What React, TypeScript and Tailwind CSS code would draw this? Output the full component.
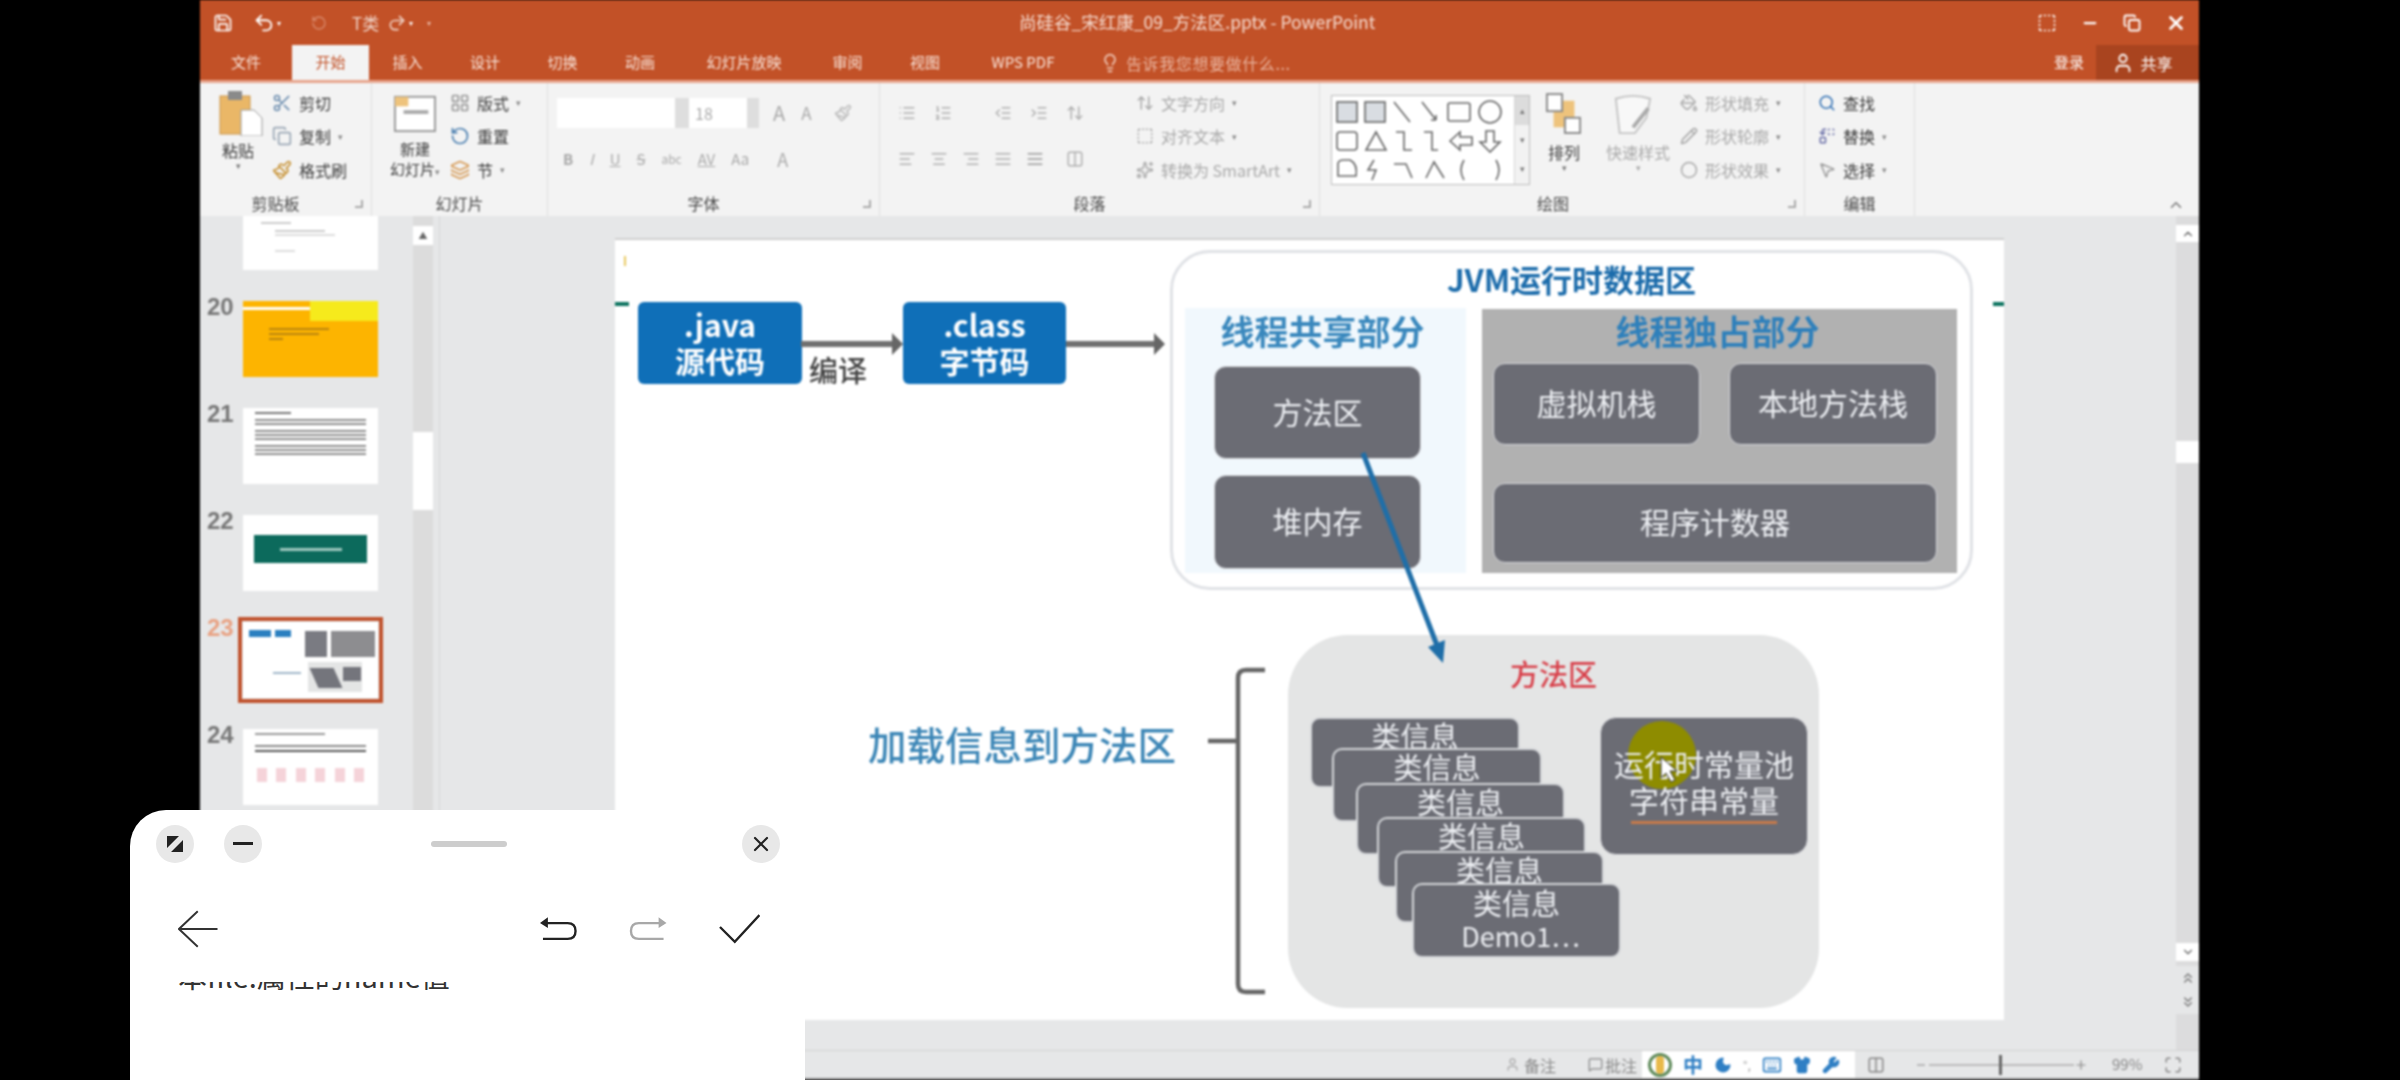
import type { ReactNode } from "react";
import clsx from "clsx";
import {
  AlignCenter,
  AlignJustify,
  AlignLeft,
  AlignRight,
  ArrowUpDown,
  Columns2,
  Copy,
  IndentDecrease,
  IndentIncrease,
  Layers,
  Lightbulb,
  List,
  ListOrdered,
  Maximize,
  MessageSquare,
  MousePointer2,
  Paintbrush,
  PaintBucket,
  Pencil,
  Replace,
  RotateCcw,
  Save,
  Scissors,
  Search,
  Sparkles,
  SquareDashed,
  User,
  Wrench,
  Moon,
  Keyboard,
  Shirt,
  LayoutGrid,
  ChevronUp,
  ChevronDown,
  ChevronsUp,
  ChevronsDown,
  Minus,
  Plus,
  Undo2,
  Redo2,
  Circle,
  X,
} from "lucide-react";

const tabs = [
  { label: "文件", width: "w-[92px]" },
  { label: "开始", width: "w-[77px]", active: true },
  { label: "插入", width: "w-[77px]" },
  { label: "设计", width: "w-[78px]" },
  { label: "切换", width: "w-[77px]" },
  { label: "动画", width: "w-[78px]" },
  { label: "幻灯片放映", width: "w-[130px]" },
  { label: "审阅", width: "w-[77px]" },
  { label: "视图", width: "w-[78px]" },
  { label: "WPS PDF", width: "w-[118px]" },
];

function Group({
  label,
  className,
  labelClass,
  launcher,
  children,
}: {
  label: string;
  className: string;
  labelClass?: string;
  launcher?: boolean;
  children: ReactNode;
}) {
  return (
    <div className={clsx("relative flex h-full shrink-0 flex-col border-r border-[#dedede]", className)}>
      <div className="flex min-h-0 flex-1">{children}</div>
      <div className={clsx("h-[26px] text-center text-[16px] leading-[26px] text-[#4a4a4a]", labelClass)}>{label}</div>
      {launcher && <div className="absolute right-[8px] bottom-[8px] size-[8px] border-r-2 border-b-2 border-[#aaa]" />}
    </div>
  );
}

function SmallButton({ icon, label, muted, caret }: { icon: ReactNode; label: string; muted?: boolean; caret?: boolean }) {
  return (
    <div className={clsx("flex h-[33.5px] items-center gap-[7px] text-[16px] whitespace-nowrap", muted ? "text-[#a9a9a9]" : "text-[#3c3c3c]")}>
      {icon}
      <span>{label}</span>
      {caret && <span className="text-[9px] text-[#888]">▾</span>}
    </div>
  );
}

function ShapeGallery() {
  return (
    <div className="mt-[12px] ml-[11px] flex h-[90px] w-[199px] border border-[#bdbdbd] bg-white">
      <svg viewBox="0 0 182 88" className="h-[88px] w-[182px]" fill="none" stroke="#666" strokeWidth="1.6">
        <rect x="5" y="6" width="20" height="20" fill="#d9dde2" />
        <rect x="33" y="6" width="20" height="20" fill="#d9dde2" />
        <path d="M62 6 L78 26 M90 6 L104 24 M104 24 l-5 0 M104 24 l0 -5" />
        <rect x="116" y="7" width="22" height="18" rx="2" />
        <circle cx="158" cy="16" r="11" />
        <rect x="5" y="36" width="20" height="18" rx="3" />
        <path d="M34 54 L44 36 L54 54 Z" />
        <path d="M64 36 H72 V54 H80 M92 36 H100 V54 H106" />
        <path d="M118 45 L128 36 V41 H140 V49 H128 V54 Z" />
        <path d="M158 56 L148 46 H154 V35 H162 V46 H168 Z" />
        <path d="M6 78 V68 Q6 64 12 64 H18 Q26 68 24 80 H6 Z" />
        <path d="M42 64 L36 74 H44 L40 84" />
        <path d="M62 68 H74 L80 82 M94 82 L102 66 L112 82" />
        <path d="M132 64 Q126 74 132 84 M164 64 Q170 74 164 84" />
      </svg>
      <div className="flex w-[15px] flex-col border-l border-[#d5d5d5] bg-[#f2f2f2] text-center text-[9px] leading-[29px] text-[#777]">
        <span className="h-[29px] bg-[#dcdcdc]">▴</span>
        <span className="h-[29px]">▾</span>
        <span className="h-[29px]">▾</span>
      </div>
    </div>
  );
}

function Ribbon() {
  const muted = "size-[18px] text-[#b0b0b0]";
  return (
    <div className="flex h-[136px] shrink-0 border-t-[3px] border-[#e7a58d] bg-[#f3f3f3] pb-0">
      <Group label="剪贴板" labelClass="pr-[20px]" launcher className="w-[172px]">
        <div className="w-[72px] pt-[7px] pl-[19px]">
          <svg viewBox="0 0 44 46" className="h-[46px] w-[44px]">
            <rect x="1" y="6" width="30" height="38" fill="#eab767" stroke="#c9964e" />
            <rect x="9" y="1" width="14" height="9" fill="#8a8a8a" />
            <path d="M22 20 H35 L43 28 V46 H22 Z" fill="#fff" stroke="#9a9a9a" />
          </svg>
          <div className="mt-[6px] w-[38px] text-center text-[16px] leading-[17px] text-[#3c3c3c]">粘贴</div>
          <div className="w-[38px] text-center text-[9px] text-[#777]">▾</div>
        </div>
        <div className="pt-[3px]">
          <SmallButton icon={<Scissors className="size-[20px] text-[#6f8fb0]" />} label="剪切" />
          <SmallButton icon={<Copy className="size-[20px] text-[#9aa7b5]" />} label="复制" caret />
          <SmallButton icon={<Paintbrush className="size-[20px] text-[#c9963c]" />} label="格式刷" />
        </div>
      </Group>
      <Group label="幻灯片" className="w-[176px]">
        <div className="w-[78px] pt-[10px] pl-[8px]">
          <svg viewBox="0 0 44 42" className="ml-[14px] h-[40px] w-[42px]">
            <rect x="1" y="4" width="42" height="36" fill="#fff" stroke="#999" strokeWidth="2" />
            <rect x="1" y="4" width="14" height="10" fill="#eec37c" />
            <rect x="10" y="18" width="26" height="4" fill="#aaa" />
          </svg>
          <div className="mt-[6px] text-center text-[15px] leading-[20px] text-[#3c3c3c]">
            <div>新建</div>
            <div className="whitespace-nowrap">幻灯片<span className="text-[9px] text-[#888]">▾</span></div>
          </div>
        </div>
        <div className="pt-[3px]">
          <SmallButton icon={<LayoutGrid className="size-[20px] text-[#999]" />} label="版式" caret />
          <SmallButton icon={<RotateCcw className="size-[20px] text-[#4b7fb0]" />} label="重置" />
          <SmallButton icon={<Layers className="size-[20px] text-[#d69a55]" />} label="节" caret />
        </div>
      </Group>
      <Group label="字体" labelClass="pr-[20px]" launcher className="w-[332px]">
        <div className="pt-[15px] pl-[9px]">
          <div className="flex h-[30px] items-center">
            <div className="h-full w-[118px] bg-white" />
            <div className="h-full w-[14px] bg-[#dedede]" />
            <div className="h-full w-[58px] bg-white pl-[6px] text-[16px] leading-[30px] text-[#aaa]">18</div>
            <div className="h-full w-[12px] bg-[#dedede]" />
            <span className="ml-[14px] text-[20px] text-[#a9a9a9]">A</span>
            <span className="ml-[16px] text-[17px] text-[#a9a9a9]">A</span>
            <Paintbrush className="ml-[22px] size-[18px] text-[#bbb]" />
          </div>
          <div className="mt-[16px] flex h-[30px] items-center gap-[16px] pl-[6px] text-[15px] text-[#a9a9a9]">
            <span className="font-bold">B</span>
            <span className="italic">I</span>
            <span className="underline">U</span>
            <span className="line-through">S</span>
            <span className="text-[12px]">abc</span>
            <span className="underline">AV</span>
            <span>Aa</span>
            <span className="ml-[12px] text-[18px]">A</span>
          </div>
        </div>
      </Group>
      <Group label="段落" labelClass="pr-[20px]" launcher className="w-[440px]">
        <div className="w-[256px] pt-[15px] pl-[18px]">
          <div className="flex h-[30px] items-center gap-[18px]">
            <List className={muted} />
            <ListOrdered className={muted} />
            <span className="w-[6px]" />
            <IndentDecrease className={muted} />
            <IndentIncrease className={muted} />
            <ArrowUpDown className={muted} />
          </div>
          <div className="mt-[16px] flex h-[30px] items-center gap-[14px]">
            <AlignLeft className={muted} />
            <AlignCenter className={muted} />
            <AlignRight className={muted} />
            <AlignJustify className={muted} />
            <AlignJustify className="size-[18px] text-[#999]" />
            <Columns2 className={clsx(muted, "ml-[8px]")} />
          </div>
        </div>
        <div className="pt-[3px]">
          <SmallButton muted icon={<ArrowUpDown className="size-[18px]" />} label="文字方向" caret />
          <SmallButton muted icon={<SquareDashed className="size-[18px]" />} label="对齐文本" caret />
          <SmallButton muted icon={<Sparkles className="size-[18px]" />} label="转换为 SmartArt" caret />
        </div>
      </Group>
      <Group label="绘图" labelClass="pr-[18px]" launcher className="w-[485px]">
        <ShapeGallery />
        <div className="w-[68px] pt-[10px] pl-[16px]">
          <svg viewBox="0 0 38 44" className="h-[42px] w-[36px]">
            <rect x="8" y="8" width="22" height="28" fill="#eec37c" />
            <rect x="1" y="1" width="16" height="18" fill="#fff" stroke="#888" strokeWidth="2" />
            <rect x="20" y="26" width="16" height="16" fill="#fff" stroke="#888" strokeWidth="2" />
          </svg>
          <div className="mt-[9px] w-[36px] text-center text-[16px] leading-[17px] text-[#3c3c3c]">排列</div>
          <div className="w-[36px] text-center text-[9px] text-[#777]">▾</div>
        </div>
        <div className="w-[80px] pt-[10px]">
          <svg viewBox="0 0 44 44" className="ml-[14px] h-[42px] w-[42px]" fill="#f8f8f8" stroke="#c4c4c4" strokeWidth="2">
            <path d="M4 6 Q22 0 40 6 L36 26 L24 42 H8 Z" />
            <path d="M22 36 L38 16" stroke="#aaa" strokeWidth="4" />
          </svg>
          <div className="mt-[9px] text-center text-[16px] leading-[17px] whitespace-nowrap text-[#a9a9a9]">快速样式</div>
          <div className="text-center text-[9px] text-[#aaa]">▾</div>
        </div>
        <div className="pt-[3px] pl-[2px]">
          <SmallButton muted icon={<PaintBucket className="size-[18px]" />} label="形状填充" caret />
          <SmallButton muted icon={<Pencil className="size-[18px]" />} label="形状轮廓" caret />
          <SmallButton muted icon={<Circle className="size-[18px]" />} label="形状效果" caret />
        </div>
      </Group>
      <Group label="编辑" className="w-[110px]">
        <div className="pt-[3px] pl-[13px]">
          <SmallButton icon={<Search className="size-[18px] text-[#2f6fb3]" />} label="查找" />
          <SmallButton icon={<Replace className="size-[18px] text-[#6a6fa8]" />} label="替换" caret />
          <SmallButton icon={<MousePointer2 className="size-[18px] text-[#999]" />} label="选择" caret />
        </div>
      </Group>
      <div className="flex flex-1 items-end justify-end pr-[14px] pb-[2px]">
        <ChevronUp className="size-[18px] text-[#777]" />
      </div>
    </div>
  );
}

function TextBlock({ rows }: { rows: number }) {
  return (
    <div className="mx-[12px] mt-[5px] flex flex-col gap-[2px]">
      {Array.from({ length: rows }).map((_, i) => (
        <div key={i} className="h-[2px] w-full bg-[#8c8c8c]" />
      ))}
    </div>
  );
}

function Thumb({ n, selected, children }: { n: number; selected?: boolean; children: ReactNode }) {
  return (
    <div className="flex h-[76px] shrink-0">
      <div className={clsx("-mt-[5px] w-[43px] pl-[7px] font-['Liberation_Sans',sans-serif] text-[24px] leading-[22px] font-bold", selected ? "text-[#e8a283]" : "text-[#777]")}>
        {n}
      </div>
      <div className={clsx("h-[76px] w-[135px] overflow-hidden bg-white", selected && "outline-4 outline-offset-1 outline-[#c0532e]")}>{children}</div>
    </div>
  );
}

function ThumbPane() {
  return (
    <div className="flex w-[240px] shrink-0 border-r border-[#d8d8d8]">
      <div className="flex w-[213px] flex-col gap-[31px] overflow-hidden">
        <div className="ml-[43px] h-[54px] w-[135px] shrink-0 bg-white px-[18px] pt-[6px]">
          <div className="h-[2px] w-[30px] bg-[#ccc]" />
          <div className="mt-[6px] ml-[14px] h-[2px] w-[50px] bg-[#ccc]" />
          <div className="mt-[2px] ml-[14px] h-[2px] w-[60px] bg-[#ddd]" />
          <div className="mt-[14px] ml-[14px] h-[2px] w-[20px] bg-[#ddd]" />
        </div>
        <Thumb n={20}>
          <div className="relative h-full bg-[#fdb400] pt-[6px]">
            <div className="h-[3px] w-full bg-white" />
            <div className="absolute top-0 right-0 h-[20px] w-[68px] bg-[#f6ea1c]" />
            <div className="mt-[18px] ml-[26px] h-[2px] w-[60px] bg-[#b98410]" />
            <div className="mt-[3px] ml-[26px] h-[2px] w-[50px] bg-[#b98410]" />
            <div className="mt-[3px] ml-[26px] h-[2px] w-[14px] bg-[#b98410]" />
          </div>
        </Thumb>
        <Thumb n={21}>
          <div className="mx-[12px] mt-[4px] h-[2px] w-[36px] bg-[#777]" />
          <TextBlock rows={2} />
          <TextBlock rows={3} />
          <TextBlock rows={3} />
        </Thumb>
        <Thumb n={22}>
          <div className="mx-[11px] mt-[20px] flex h-[28px] items-center justify-center bg-[#0c6a5c]">
            <div className="h-[3px] w-[62px] bg-[#9fc8bf]" />
          </div>
        </Thumb>
        <Thumb n={23} selected>
          <div className="relative h-full">
            <div className="absolute top-[8px] left-[6px] h-[7px] w-[22px] bg-[#2a7fc0]" />
            <div className="absolute top-[8px] left-[32px] h-[7px] w-[16px] bg-[#2a7fc0]" />
            <div className="absolute top-[9px] left-[62px] h-[26px] w-[22px] bg-[#7a7b82]" />
            <div className="absolute top-[9px] left-[88px] h-[26px] w-[44px] bg-[#8d8d90]" />
            <div className="absolute top-[40px] left-[65px] h-[30px] w-[54px] bg-[#e4e5e5]" />
            <div className="absolute top-[46px] left-[71px] h-[20px] w-[24px] skew-x-[24deg] bg-[#74757c]" />
            <div className="absolute top-[45px] left-[100px] h-[14px] w-[18px] bg-[#74757c]" />
            <div className="absolute top-[50px] left-[30px] h-[2px] w-[28px] bg-[#9fb6c8]" />
          </div>
        </Thumb>
        <Thumb n={24}>
          <div className="mx-[12px] mt-[4px] h-[2px] w-[70px] bg-[#999]" />
          <div className="mx-[12px] mt-[10px] h-[2px] bg-[#888]" />
          <div className="mx-[12px] mt-[3px] h-[2px] bg-[#555]" />
          <div className="mx-[14px] mt-[16px] flex justify-between">
            {[0, 1, 2, 3, 4, 5].map((i) => (
              <div key={i} className="h-[14px] w-[10px] bg-[#f5d3d9]" />
            ))}
          </div>
        </Thumb>
      </div>
      <div className="flex w-[20px] flex-col bg-[#dcdcdc]">
        <div className="mt-[10px] flex h-[19px] items-center justify-center bg-white text-[9px] text-[#666]">▲</div>
        <div className="mt-[187px] h-[78px] bg-white" />
      </div>
    </div>
  );
}

function Card({ className, children }: { className: string; children?: ReactNode }) {
  return (
    <div
      className={clsx(
        "absolute flex items-center justify-center rounded-[12px] border border-[#d7d8dc] bg-[#6b6c74] pb-[4px] text-[30px] leading-[36px] text-[#eceef2]",
        className,
      )}
    >
      {children}
    </div>
  );
}

function ClassCard({ className, children }: { className: string; children?: ReactNode }) {
  return (
    <div
      className={clsx(
        "absolute rounded-[10px] border-2 border-[#d5d7da] bg-[#6b6c74] text-center text-[29px] leading-[32px] text-[#eceef2]",
        className,
      )}
    >
      {children ?? "类信息"}
    </div>
  );
}

function Slide() {
  return (
    <div className="relative mt-[22px] ml-[175px] h-[782px] w-[1389px] border-t-2 border-[#cfcfcf] bg-white">
      <div className="absolute top-[62px] left-0 h-[4px] w-[14px] bg-[#0d7360]" />
      <div className="absolute top-[62px] right-0 h-[4px] w-[11px] bg-[#0d7360]" />
      <div className="absolute top-[16px] left-[9px] h-[10px] w-[2px] bg-[#e8c860]" />

      <div className="absolute top-[62px] left-[23px] flex h-[82px] w-[164px] flex-col items-center justify-center rounded-[6px] bg-[#0f6fb8] pb-[3px] text-[30px] leading-[36px] font-bold text-white">
        <span>.java</span>
        <span>源代码</span>
      </div>
      <div className="absolute top-[62px] left-[288px] flex h-[82px] w-[163px] flex-col items-center justify-center rounded-[6px] bg-[#0f6fb8] pb-[3px] text-[30px] leading-[36px] font-bold text-white">
        <span>.class</span>
        <span>字节码</span>
      </div>
      <div className="absolute top-[113px] left-[194px] text-[29px] leading-[32px] font-medium text-[#444]">编译</div>

      <div className="absolute top-[10px] left-[555px] h-[340px] w-[803px] rounded-[40px] border-[3px] border-[#e0e2e6]" />
      <div className="absolute top-[19px] left-[555px] w-[803px] text-center text-[31px] leading-[40px] font-bold text-[#1c6cab]">JVM运行时数据区</div>
      <div className="absolute top-[68px] left-[570px] h-[265px] w-[281px] bg-[#f1f8fd]" />
      <div className="absolute top-[69px] left-[867px] h-[264px] w-[475px] bg-[#b1b1b1]" />
      <div className="absolute top-[71px] left-[567px] w-[281px] text-center text-[34px] leading-[40px] font-bold text-[#3a88bd]">线程共享部分</div>
      <div className="absolute top-[71px] left-[865px] w-[475px] text-center text-[34px] leading-[40px] font-bold text-[#2f80bb]">线程独占部分</div>

      <Card className="top-[126px] left-[599px] h-[93px] w-[207px]">方法区</Card>
      <Card className="top-[235px] left-[599px] h-[94px] w-[207px]">堆内存</Card>
      <Card className="top-[123px] left-[878px] h-[82px] w-[207px]">虚拟机栈</Card>
      <Card className="top-[123px] left-[1114px] h-[82px] w-[208px]">本地方法栈</Card>
      <Card className="top-[243px] left-[878px] h-[80px] w-[444px]">程序计数器</Card>

      <div className="absolute top-[395px] left-[673px] h-[373px] w-[531px] rounded-[60px] bg-[#e4e5e5]" />
      <div className="absolute top-[415px] left-[673px] w-[531px] text-center text-[29px] leading-[36px] font-medium text-[#d8404a]">方法区</div>
      <div className="absolute top-[479px] left-[253px] text-[38.5px] leading-[48px] font-medium text-[#3c86b6]">加载信息到方法区</div>

      <ClassCard className="top-[477px] left-[695px] h-[71px] w-[210px]" />
      <ClassCard className="top-[508px] left-[717px] h-[74px] w-[210px]" />
      <ClassCard className="top-[543px] left-[741px] h-[72px] w-[209px]" />
      <ClassCard className="top-[577px] left-[762px] h-[71px] w-[209px]" />
      <ClassCard className="top-[611px] left-[780px] h-[72px] w-[209px]" />
      <ClassCard className="top-[643px] left-[797px] h-[75px] w-[209px]">
        <div className="pt-[1px]">类信息</div>
        <div className="pt-[2px] pl-[8px] text-[27px]">Demo1⋯</div>
      </ClassCard>

      <div className="absolute top-[477px] left-[985px] flex h-[138px] w-[208px] flex-col items-center rounded-[16px] border border-[#d7d8dc] bg-[#6b6c74] pt-[27px] text-[30px] leading-[36px] text-[#eceef2]">
        <div className="absolute top-[3px] left-[27px] size-[68px] rounded-full bg-[#8e8c00]" />
        <span className="relative">运行时常量池</span>
        <span className="relative">字符串常量</span>
        <div className="mt-[4px] h-[3px] w-[146px] bg-[#c87a4a]" />
      </div>

      <svg viewBox="615 238 1389 782" className="pointer-events-none absolute -top-[2px] left-0 h-[782px] w-[1389px]" fill="none">
        <path d="M801 344 H893 M1066 344 H1155" stroke="#707070" strokeWidth="6" />
        <path d="M892 333 L903 344 L892 355 Z M1154 333 L1165 344 L1154 355 Z" fill="#666" />
        <path d="M1363 453 L1438 648" stroke="#1f6ea8" strokeWidth="5" />
        <path d="M1443 663 L1428 647 L1445 640 Z" fill="#1f6ea8" />
        <path d="M1265 670 H1246 Q1238 670 1238 678 V984 Q1238 992 1246 992 H1265 M1208 741 H1238" stroke="#666" strokeWidth="4.5" />
        <path d="M1661 757 L1661 778 L1666 773 L1671 782 L1675 780 L1670 771 L1677 771 Z" fill="#fff" stroke="#333" strokeWidth="1" />
      </svg>
    </div>
  );
}

function StatusBar() {
  return (
    <div className="flex h-[30px] shrink-0 items-center border-t border-b-2 border-t-[#d2d2d2] border-b-[#8a8a8a] bg-[#e6e7e8] text-[16px] text-[#888]">
      <div className="ml-[1305px] flex w-[137px] items-center">
        <User className="size-[15px] text-[#aaa]" />
        <span className="ml-[4px]">备注</span>
        <MessageSquare className="ml-[32px] size-[15px] text-[#888]" />
        <span className="ml-[2px]">批注</span>
      </div>
      <div className="flex h-full w-[213px] items-center gap-[11px] bg-white pl-[6px] text-[#2f7fc4]">
        <div className="flex size-[24px] items-center justify-center rounded-full border-[3px] border-[#5f8a5a]">
          <div className="h-[18px] w-[8px] rounded-full bg-[#e8b94a]" />
        </div>
        <span className="text-[20px] leading-none font-bold">中</span>
        <Moon className="size-[18px] fill-[#2f7fc4]" />
        <span className="text-[12px] text-[#999]">°,</span>
        <Keyboard className="size-[20px]" />
        <Shirt className="size-[18px] fill-[#2f7fc4]" />
        <Wrench className="size-[18px] fill-[#2f7fc4]" />
      </div>
      <div className="ml-[12px] flex items-center text-[#888]">
        <Columns2 className="size-[18px]" />
        <Minus className="ml-[30px] size-[12px]" />
        <div className="relative ml-[2px] h-[2px] w-[145px] bg-[#bbb]">
          <div className="absolute -top-[9px] left-[70px] h-[20px] w-[3px] bg-[#666]" />
        </div>
        <Plus className="size-[14px]" />
        <span className="ml-[24px] text-[15px]">99%</span>
        <Maximize className="ml-[22px] size-[18px]" />
      </div>
    </div>
  );
}

function FloatingPanel() {
  return (
    <div className="absolute top-[810px] left-[130px] flex h-[270px] w-[675px] flex-col rounded-t-[36px] bg-white">
      <div className="relative flex h-[66px] items-center pt-[1px] pl-[26px]">
        <button className="flex size-[38px] items-center justify-center rounded-full bg-[#e8e8e8]">
          <svg viewBox="0 0 18 18" className="size-[18px]">
            <path d="M1 1 H13 L1 13 Z M17 5 V17 H5 Z" fill="#222" />
          </svg>
        </button>
        <button className="ml-[30px] flex size-[38px] items-center justify-center rounded-full bg-[#e8e8e8]">
          <div className="h-[3px] w-[20px] bg-[#222]" />
        </button>
        <div className="ml-[169px] h-[6px] w-[76px] rounded-full bg-[#cdcdcd]" />
        <button className="mr-[25px] ml-auto flex size-[38px] items-center justify-center rounded-full bg-[#e8e8e8]">
          <X className="size-[24px] text-[#222]" strokeWidth={2.2} />
        </button>
      </div>
      <div className="flex h-[106px] items-center pr-[45px] pl-[48px]">
        <svg viewBox="0 0 40 38" fill="none" stroke="#333" strokeWidth="2" className="h-[38px] w-[40px]">
          <path d="M20 1 L1 19 L20 37 M1 19 H40" />
        </svg>
        <svg viewBox="0 0 38 24" fill="none" stroke="#222" strokeWidth="2.4" className="ml-[322px] h-[24px] w-[38px]">
          <path d="M3 6 H28 Q36 6 36 14 Q36 22 28 22 H3" />
          <path d="M0 6 L8 0 V11 Z" fill="#222" stroke="none" />
        </svg>
        <svg viewBox="0 0 38 24" fill="none" stroke="#a8a8a8" strokeWidth="2.4" className="ml-[52px] h-[24px] w-[38px]">
          <path d="M35 6 H10 Q2 6 2 14 Q2 22 10 22 H35" />
          <path d="M38 6 L30 0 V11 Z" fill="#a8a8a8" stroke="none" />
        </svg>
        <svg viewBox="0 0 42 30" fill="none" stroke="#222" strokeWidth="2.4" className="ml-[52px] h-[30px] w-[42px]">
          <path d="M1 13 L16 28 L41 1" />
        </svg>
      </div>
      <div className="h-[11px] overflow-hidden pl-[48px]">
        <div className="-mt-[29px] text-[29px] leading-[44px] whitespace-nowrap text-[#333]">本file:属性的name值</div>
      </div>
    </div>
  );
}

export default function App() {
  return (
    <div className="relative h-[1080px] w-[2400px] overflow-hidden bg-black font-['Noto_Sans_CJK_SC','Noto_Sans',sans-serif]">
      <div className="ml-[200px] flex h-full w-[1999px] flex-col blur-[1px]">
        <div className="flex h-[45px] shrink-0 items-center bg-[#c25127] text-white">
          <Save className="ml-[13px] size-[20px]" />
          <Undo2 className="ml-[20px] size-[22px]" />
          <span className="ml-[2px] text-[8px]">▾</span>
          <RotateCcw className="ml-[30px] size-[16px] text-[#d98a6c]" />
          <span className="ml-[25px] text-[17px] text-[#f0d4c8]">T类</span>
          <Redo2 className="ml-[8px] size-[20px] text-[#f0d4c8]" />
          <span className="ml-[2px] text-[8px]">▾</span>
          <span className="ml-[14px] text-[8px] text-[#e9b7a4]">▾</span>
          <div className="ml-[576px] w-[380px] text-center text-[17.5px] whitespace-nowrap text-[#f6ddd2]">尚硅谷_宋红康_09_方法区.pptx - PowerPoint</div>
          <div className="ml-auto flex items-center">
            <SquareDashed className="size-[20px]" />
            <Minus className="ml-[24px] size-[18px]" strokeWidth={3} />
            <Copy className="ml-[24px] size-[18px]" strokeWidth={2.5} />
            <X className="mr-[12px] ml-[24px] size-[22px]" strokeWidth={3} />
          </div>
        </div>
        <div className="flex h-[35px] shrink-0 items-center bg-[#c25127] text-[15px] text-[#f8e4da]">
          {tabs.map((t) => (
            <div
              key={t.label}
              className={clsx("flex h-full shrink-0 items-center justify-center", t.width, t.active && "bg-[#f3f3f3] text-[#c25127]")}
            >
              {t.label}
            </div>
          ))}
          <Lightbulb className="ml-[18px] size-[20px] text-[#f0c9b8]" />
          <span className="ml-[6px] text-[16px] tracking-[0.6px] text-[#e9b49f]">告诉我您想要做什么...</span>
          <span className="ml-auto text-white">登录</span>
          <div className="ml-[12px] flex h-full w-[103px] items-center justify-center gap-[6px] bg-[#a9441f] pr-[10px] text-[16px] text-white">
            <User className="size-[22px]" />
            共享
          </div>
        </div>
        <Ribbon />
        <div className="flex h-[834px] shrink-0 overflow-hidden bg-[#e6e7e8]">
          <ThumbPane />
          <div className="min-w-0 flex-1">
            <Slide />
          </div>
          <div className="flex w-[23px] shrink-0 flex-col items-center bg-[#dcdcdd] pt-[9px] pb-[36px]">
            <div className="flex h-[17px] w-full items-center justify-center bg-white">
              <ChevronUp className="size-[14px] text-[#666]" />
            </div>
            <div className="mt-[199px] h-[22px] w-full bg-white" />
            <div className="mt-auto flex h-[18px] w-full items-center justify-center bg-white">
              <ChevronDown className="size-[14px] text-[#666]" />
            </div>
            <div className="mt-[5px] flex h-[48px] w-full flex-col items-center justify-around bg-[#e6e7e8] text-[#777]">
              <ChevronsUp className="size-[16px]" />
              <ChevronsDown className="size-[16px]" />
            </div>
          </div>
        </div>
        <StatusBar />
      </div>
      <FloatingPanel />
    </div>
  );
}
